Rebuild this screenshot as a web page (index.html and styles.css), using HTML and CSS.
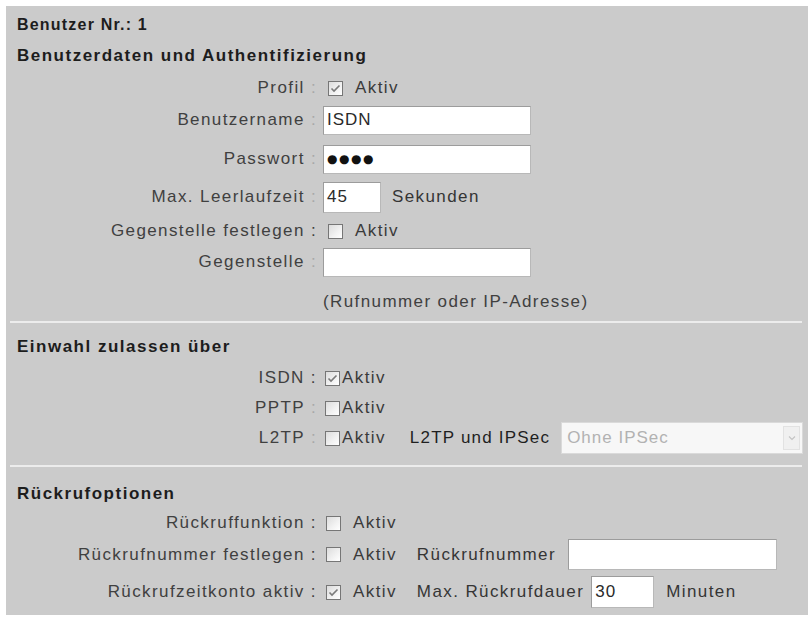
FILE: index.html
```html
<!DOCTYPE html>
<html lang="de">
<head>
<meta charset="utf-8">
<title>Benutzer Nr.: 1</title>
<link rel="stylesheet" href="styles.css">
</head>
<body>
<div class="panel">
  <div class="title">Benutzer Nr.: 1</div>
  <div class="heading">Benutzerdaten und Authentifizierung</div>

  <div class="row r-profil">
    <span class="label">Profil <span class="faint">:</span></span>
    <span class="ctrl">
      <span class="cb cb-a"><svg viewBox="0 0 15 15" width="15" height="15"><polyline points="3.5,7.5 6,10 11.5,4.5" fill="none" stroke="#7a7a7a" stroke-width="1.6"/></svg></span>
      <span class="aktiv">Aktiv</span>
    </span>
  </div>
  <div class="row r-user">
    <span class="label">Benutzername <span class="faint">:</span></span>
    <span class="ctrl"><span class="field wide">ISDN</span></span>
  </div>
  <div class="row r-pass">
    <span class="label">Passwort <span class="faint">:</span></span>
    <span class="ctrl"><span class="field wide"><span class="dots">●●●●</span></span></span>
  </div>
  <div class="row r-idle">
    <span class="label">Max. Leerlaufzeit <span class="faint">:</span></span>
    <span class="ctrl"><span class="field short">45</span><span class="unit">Sekunden</span></span>
  </div>
  <div class="row r-gfest">
    <span class="label">Gegenstelle festlegen :</span>
    <span class="ctrl"><span class="cb cb-a"></span><span class="aktiv">Aktiv</span></span>
  </div>
  <div class="row r-gst">
    <span class="label">Gegenstelle <span class="faint">:</span></span>
    <span class="ctrl"><span class="field wide"></span></span>
  </div>
  <div class="row r-hint">
    <span class="label"></span>
    <span class="ctrl">(Rufnummer oder IP-Adresse)</span>
  </div>

  <div class="sep sep1"></div>

  <div class="heading h-einwahl">Einwahl zulassen über</div>
  <div class="row r-isdn">
    <span class="label">ISDN :</span>
    <span class="ctrl">
      <span class="cb cb-b"><svg viewBox="0 0 15 15" width="15" height="15"><polyline points="3.5,7.5 6,10 11.5,4.5" fill="none" stroke="#7a7a7a" stroke-width="1.6"/></svg></span>
      <span class="aktiv tight">Aktiv</span>
    </span>
  </div>
  <div class="row r-pptp">
    <span class="label">PPTP <span class="faint">:</span></span>
    <span class="ctrl"><span class="cb cb-b"></span><span class="aktiv tight">Aktiv</span></span>
  </div>
  <div class="row r-l2tp">
    <span class="label">L2TP <span class="faint">:</span></span>
    <span class="ctrl">
      <span class="cb cb-b"></span><span class="aktiv tight">Aktiv</span>
      <span class="ipsec-label">L2TP und IPSec</span>
      <span class="select"><span class="select-text">Ohne IPSec</span><span class="select-btn"><svg viewBox="0 0 10 10" width="10" height="10"><polyline points="2,3.5 5,6.5 8,3.5" fill="none" stroke="#c4c4c4" stroke-width="1.2"/></svg></span></span>
    </span>
  </div>

  <div class="sep sep2"></div>

  <div class="heading h-rueck">Rückrufoptionen</div>
  <div class="row r-rfunk">
    <span class="label">Rückruffunktion :</span>
    <span class="ctrl"><span class="cb cb-c"></span><span class="aktiv">Aktiv</span></span>
  </div>
  <div class="row r-rnum">
    <span class="label">Rückrufnummer festlegen :</span>
    <span class="ctrl">
      <span class="cb cb-c"></span><span class="aktiv">Aktiv</span>
      <span class="extra-label">Rückrufnummer</span>
      <span class="field rnum"></span>
    </span>
  </div>
  <div class="row r-rzeit">
    <span class="label">Rückrufzeitkonto aktiv :</span>
    <span class="ctrl">
      <span class="cb cb-c"><svg viewBox="0 0 15 15" width="15" height="15"><polyline points="3.5,7.5 6,10 11.5,4.5" fill="none" stroke="#7a7a7a" stroke-width="1.6"/></svg></span>
      <span class="aktiv">Aktiv</span>
      <span class="extra-label">Max. Rückrufdauer</span>
      <span class="field rdauer">30</span>
      <span class="unit min">Minuten</span>
    </span>
  </div>
</div>
</body>
</html>
```

FILE: styles.css
```css
html, body {
  margin: 0;
  padding: 0;
  background: #ffffff;
}

body {
  font-family: "Liberation Sans", Arial, sans-serif;
  padding: 6px 4px 5px 6px;
}

.panel {
  width: 802px;
  height: 609px;
  box-sizing: border-box;
  background: #cbcbcb;
  padding-left: 11px;
  display: flex;
  flex-direction: column;
  overflow: hidden;
}

.title {
  height: 38px;
  flex: none;
  display: flex;
  align-items: center;
  font-size: 16px;
  font-weight: bold;
  letter-spacing: 1.2px;
  color: #1d1d1d;
}

.heading {
  height: 22px;
  flex: none;
  display: flex;
  align-items: center;
  font-size: 17px;
  font-weight: bold;
  letter-spacing: 1.5px;
  color: #1d1d1d;
}

.title + .heading { margin-top: 1px; }

.row {
  flex: none;
  display: flex;
  align-items: center;
  font-size: 17px;
  letter-spacing: 1.4px;
  color: #404040;
}

.label {
  width: 300px;
  flex: none;
  text-align: right;
  white-space: nowrap;
}

.faint {
  color: #a8a8a8;
}

.ctrl {
  margin-left: 6px;
  display: flex;
  align-items: center;
  white-space: nowrap;
}

/* vertical rhythm */
.r-profil { height: 30px; margin-top: 6px; }
.r-user   { height: 30px; margin-top: 2px; }
.r-pass   { height: 30px; margin-top: 9px; }
.r-idle   { height: 32px; margin-top: 7px; }
.r-gfest  { height: 30px; margin-top: 3px; }
.r-gst    { height: 32px; margin-top: 0; }
.r-hint   { height: 24px; margin-top: 12px; }

.sep {
  flex: none;
  height: 2px;
  background: #ececec;
  margin-left: -7px;
  margin-right: 6px;
}
.sep1 { margin-top: 7px; }
.h-einwahl { margin-top: 13px; }
.r-isdn { height: 30px; margin-top: 5px; }
.r-pptp { height: 28px; margin-top: 1px; }
.r-l2tp { height: 32px; margin-top: 0; }
.sep2 { margin-top: 11px; }
.h-rueck { margin-top: 16px; }
.r-rfunk { height: 16px; margin-top: 10px; }
.r-rnum  { height: 31px; margin-top: 8px; }
.r-rzeit { height: 32px; margin-top: 6px; }

/* checkboxes */
.cb {
  width: 15px;
  height: 15px;
  box-sizing: border-box;
  border: 1px solid #767676;
  background: linear-gradient(135deg, #dcdcdc 0%, #f2f2f2 60%, #ffffff 100%);
  display: inline-flex;
  align-items: center;
  justify-content: center;
  flex: none;
}
.cb svg {
  display: block;
  margin: -1px;
}
.cb-a { margin-left: 5px; }
.cb-b { margin-left: 2px; }
.cb-c { margin-left: 3px; }

.aktiv {
  margin-left: 12px;
  color: #3a3a3a;
}
.aktiv.tight {
  margin-left: 2px;
}

/* text fields */
.field {
  box-sizing: border-box;
  height: 29px;
  background: #ffffff;
  border: 1px solid #9c9c9c;
  border-right-color: #b8b8b8;
  border-bottom-color: #b8b8b8;
  display: inline-flex;
  align-items: center;
  padding-left: 3px;
  color: #2a2a2a;
  letter-spacing: 1px;
  flex: none;
}
.field.wide { width: 208px; }
.field.short { width: 58px; height: 31px; }
.field.rnum { width: 209px; height: 31px; margin-left: 12px; }
.field.rdauer { width: 63px; height: 32px; margin-left: 7px; }

.dots {
  font-family: "DejaVu Sans", sans-serif;
  font-size: 12px;
  letter-spacing: 1.5px;
  color: #111111;
}

.unit {
  margin-left: 11px;
  color: #353535;
}
.unit.min { margin-left: 12px; }

.extra-label {
  margin-left: 20px;
  color: #353535;
}

.ipsec-label {
  margin-left: 24px;
  color: #1f1f1f;
  letter-spacing: 1.2px;
}

.select {
  margin-left: 11px;
  width: 242px;
  height: 32px;
  box-sizing: border-box;
  background: #f7f7f7;
  border: 1px solid #dadada;
  display: inline-flex;
  align-items: center;
  justify-content: space-between;
  padding: 0 2px 0 5px;
}
.select-text {
  color: #b2b2b2;
  letter-spacing: 1px;
}
.select-btn {
  width: 17px;
  height: 24px;
  box-sizing: border-box;
  border: 1px solid #e2e2e2;
  background: #f0f0f0;
  display: inline-flex;
  align-items: center;
  justify-content: center;
}
.select-btn svg { display: block; }
```
